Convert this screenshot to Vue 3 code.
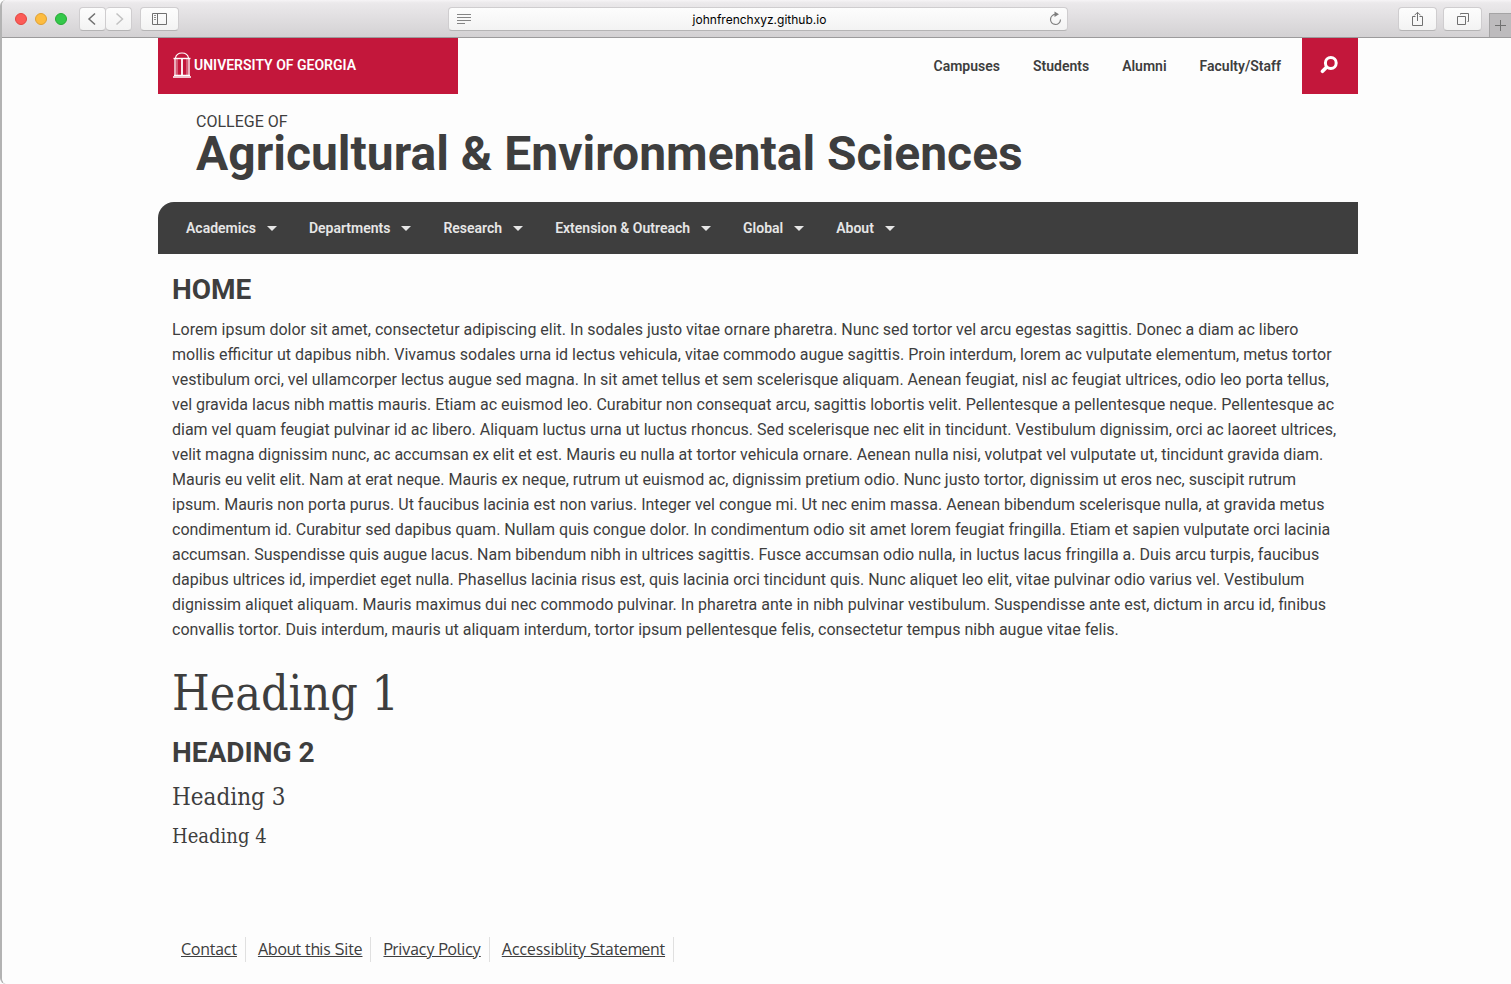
<script setup>
const topLinks = ['Campuses', 'Students', 'Alumni', 'Faculty/Staff']
const sections = ['Academics', 'Departments', 'Research', 'Extension & Outreach', 'Global', 'About']
const footerLinks = ['Contact', 'About this Site', 'Privacy Policy', 'Accessiblity Statement']
</script>

<template>
  <div class="window">
    <header class="toolbar">
      <div class="side">
        <div class="lights">
          <button class="light red" aria-label="Close"></button>
          <button class="light yellow" aria-label="Minimize"></button>
          <button class="light green" aria-label="Zoom"></button>
        </div>
        <div class="pair">
          <button class="tool back" aria-label="Back">
            <svg width="12" height="14" viewBox="0 0 12 14"><path d="M8 1.500L2 7l6 5.500" fill="none" stroke="#6f6f6f" stroke-width="1.500" /></svg>
          </button>
          <button class="tool forward" aria-label="Forward" disabled>
            <svg width="12" height="14" viewBox="0 0 12 14"><path d="M3.500 1.500l6 5.500-6 5.500" fill="none" stroke="#c2c2c2" stroke-width="1.500" /></svg>
          </button>
        </div>
        <button class="tool wide" aria-label="Show sidebar">
          <svg width="16" height="12" viewBox="0 0 16 12" fill="none" stroke="#707070"><path d="M.5.5h14v11H.5zM5.500.5v11" /><path d="M2 2.500h2M2 4.500h2M2 6.500h2" stroke="#8f8f8f" /></svg>
        </button>
      </div>
      <div class="address">
        <svg width="14" height="10" viewBox="0 0 14 10"><path d="M0 .5h14M0 3.500h14M0 6.500h14M0 9.500h8" stroke="#858585" /></svg>
        <input type="text" value="johnfrenchxyz.github.io" aria-label="Address" />
        <button class="reload" aria-label="Reload">
          <svg width="13" height="15" viewBox="0 0 13 15"><path d="M7 3.500A5 5 0 1 0 11.500 8.500" fill="none" stroke="#808080" stroke-width="1.200" /><path d="M5.500.5L10 3.300 5.500 6z" fill="#7d7d7d" /></svg>
        </button>
      </div>
      <div class="side end">
        <button class="tool wide" aria-label="Share">
          <svg width="13" height="16" viewBox="0 0 13 16" fill="none" stroke="#707070"><path d="M4.500 5.500h-3v9h10v-9h-3M6.500 10V1.500M3.500 4.300l3-3 3 3" /></svg>
        </button>
        <button class="tool wide" aria-label="Show all tabs">
          <svg width="14" height="14" viewBox="0 0 14 14" fill="none" stroke="#707070"><path d="M1.500 4.500h8v8h-8zM4.500 2.500v-1h8v8h-1" /></svg>
        </button>
        <button class="newtab" aria-label="New tab">
          <svg width="13" height="13" viewBox="0 0 13 13"><path d="M6.500 1v11M1 6.500h11" stroke="#707070" /></svg>
        </button>
      </div>
    </header>

    <div class="page">
      <div class="container">
        <div class="topbar">
          <a class="brand" href="#">
            <svg width="18" height="26" viewBox="0 0 18 26" fill="none" stroke="#fff">
              <path d="M2.500 6C3 3 5.500 1 9 1s6 2 6.500 5" stroke-width="1.200" />
              <path d="M.5 6.500h17" stroke-width="1.400" />
              <path d="M2 7v16M16 7v16" stroke-width="1.300" />
              <path d="M4 7v16M14 7v16" stroke-width=".6" />
              <path d="M9 7v16" stroke-width="1.800" />
              <path d="M1 23.300h16M0 25h18" stroke-width="1.300" />
            </svg>
            <span>UNIVERSITY OF GEORGIA</span>
          </a>
          <nav class="toplinks" aria-label="University">
            <a v-for="link in topLinks" :key="link" href="#">{{ link }}</a>
          </nav>
          <button class="search" aria-label="Search">
            <svg width="18" height="18" viewBox="0 0 18 18" fill="none" stroke="#fff"><circle cx="10.800" cy="7" r="5.400" stroke-width="3" /><path d="M6.500 11.300L2.500 15.300" stroke-width="3.600" stroke-linecap="round" /></svg>
          </button>
        </div>

        <div class="masthead">
          <p class="kicker">COLLEGE OF</p>
          <p class="title">Agricultural &amp; Environmental Sciences</p>
        </div>

        <nav class="mainnav" aria-label="Main">
          <button v-for="section in sections" :key="section">
            {{ section }}
            <svg width="10" height="5" viewBox="0 0 10 5"><path d="M0 0h10L5 5z" fill="#e6e6e6" /></svg>
          </button>
        </nav>

        <main class="content">
          <h2>HOME</h2>
          <p>Lorem ipsum dolor sit amet, consectetur adipiscing elit. In sodales justo vitae ornare pharetra. Nunc sed tortor vel arcu egestas sagittis. Donec a diam ac libero mollis efficitur ut dapibus nibh. Vivamus sodales urna id lectus vehicula, vitae commodo augue sagittis. Proin interdum, lorem ac vulputate elementum, metus tortor vestibulum orci, vel ullamcorper lectus augue sed magna. In sit amet tellus et sem scelerisque aliquam. Aenean feugiat, nisl ac feugiat ultrices, odio leo porta tellus, vel gravida lacus nibh mattis mauris. Etiam ac euismod leo. Curabitur non consequat arcu, sagittis lobortis velit. Pellentesque a pellentesque neque. Pellentesque ac diam vel quam feugiat pulvinar id ac libero. Aliquam luctus urna ut luctus rhoncus. Sed scelerisque nec elit in tincidunt. Vestibulum dignissim, orci ac laoreet ultrices, velit magna dignissim nunc, ac accumsan ex elit et est. Mauris eu nulla at tortor vehicula ornare. Aenean nulla nisi, volutpat vel vulputate ut, tincidunt gravida diam. Mauris eu velit elit. Nam at erat neque. Mauris ex neque, rutrum ut euismod ac, dignissim pretium odio. Nunc justo tortor, dignissim ut eros nec, suscipit rutrum ipsum. Mauris non porta purus. Ut faucibus lacinia est non varius. Integer vel congue mi. Ut nec enim massa. Aenean bibendum scelerisque nulla, at gravida metus condimentum id. Curabitur sed dapibus quam. Nullam quis congue dolor. In condimentum odio sit amet lorem feugiat fringilla. Etiam et sapien vulputate orci lacinia accumsan. Suspendisse quis augue lacus. Nam bibendum nibh in ultrices sagittis. Fusce accumsan odio nulla, in luctus lacus fringilla a. Duis arcu turpis, faucibus dapibus ultrices id, imperdiet eget nulla. Phasellus lacinia risus est, quis lacinia orci tincidunt quis. Nunc aliquet leo elit, vitae pulvinar odio varius vel. Vestibulum dignissim aliquet aliquam. Mauris maximus dui nec commodo pulvinar. In pharetra ante in nibh pulvinar vestibulum. Suspendisse ante est, dictum in arcu id, finibus convallis tortor. Duis interdum, mauris ut aliquam interdum, tortor ipsum pellentesque felis, consectetur tempus nibh augue vitae felis.</p>
          <h1>Heading 1</h1>
          <h2>HEADING 2</h2>
          <h3>Heading 3</h3>
          <h4>Heading 4</h4>
        </main>

        <footer class="footer">
          <ul>
            <li v-for="link in footerLinks" :key="link"><a href="#">{{ link }}</a></li>
          </ul>
        </footer>
      </div>
    </div>
  </div>
</template>

<style>
body {
  margin: 0;
  background: #fdfdfd;
}
</style>

<style scoped>
* {
  box-sizing: border-box;
}
.window {
  display: flex;
  flex-direction: column;
  min-height: 100vh;
  border-left: 2px solid #b3b3b3;
  border-radius: 6px 0 0 6px;
  color: #3e3e3e;
  font-family: Roboto, "Liberation Sans", sans-serif;
}
button {
  font: inherit;
  border: 0;
  padding: 0;
  margin: 0;
}
svg {
  display: block;
  flex: none;
}
.toolbar {
  display: flex;
  align-items: center;
  height: 38px;
  padding-left: 2px;
  border-bottom: 1px solid #9c9b9c;
  border-radius: 5px 0 0 0;
  background: linear-gradient(#f6f4f6 0, #ebe9eb 3px, #d3d1d3 100%);
}
.side {
  flex: 1;
  display: flex;
  align-items: center;
  align-self: stretch;
}
.lights {
  display: flex;
  gap: 8px;
  margin: 0 12px 0 11px;
}
.light {
  width: 12px;
  height: 12px;
  border-radius: 50%;
}
.red {
  background: #fc5b57;
  border: 1px solid #e24640;
}
.yellow {
  background: #fdbc40;
  border: 1px solid #dfa033;
}
.green {
  background: #34c84a;
  border: 1px solid #27aa35;
}
.pair {
  display: flex;
  margin-right: 8px;
}
.tool {
  display: flex;
  align-items: center;
  justify-content: center;
  height: 24px;
  width: 27px;
  border: 1px solid #cfcdcf;
  border-bottom-color: #b5b4b5;
  border-radius: 4px;
  background: linear-gradient(#fdfdfd, #f3f3f3);
}
.pair .forward {
  border-left: 0;
  width: 26px;
}
.wide {
  width: 39px;
}
.address {
  display: flex;
  align-items: center;
  width: 620px;
  max-width: 50%;
  height: 24px;
  padding: 0 5px 0 8px;
  border: 1px solid #cfcdcf;
  border-bottom-color: #b5b4b5;
  border-radius: 4px;
  background: linear-gradient(#fdfdfd, #f3f3f3);
}
.address input {
  flex: 1;
  min-width: 0;
  border: 0;
  padding: 2px 0 0;
  background: none;
  color: #000;
  font: 12px/16px Inter, "Liberation Sans", sans-serif;
  text-align: center;
}
.reload {
  background: none;
}
.end {
  justify-content: flex-end;
  gap: 6px;
}
.newtab {
  display: flex;
  align-items: center;
  justify-content: center;
  align-self: flex-end;
  width: 22px;
  height: 24px;
  margin-left: 1px;
  border: solid #a5a4a5;
  border-width: 1px 0 0 1px;
  background: #bdbbbd;
}
.page {
  flex: 1;
  padding-left: 3px;
  background: #fdfdfd;
  border-radius: 0 0 0 6px;
}
.container {
  max-width: 1200px;
  margin: 0 auto;
}
.topbar {
  display: flex;
  height: 56px;
}
.brand {
  display: flex;
  align-items: center;
  gap: 3px;
  width: 300px;
  padding: 0 15px 3px;
  background: #c3173b;
  color: #fff;
  font-size: 14px;
  font-weight: 600;
  text-decoration: none;
}
.toplinks {
  flex: 1;
  display: flex;
  align-items: center;
  justify-content: flex-end;
  gap: 33px;
  padding-right: 21px;
}
.toplinks a {
  color: #3e3e3e;
  font-size: 14px;
  font-weight: 600;
  text-decoration: none;
}
.search {
  display: flex;
  align-items: center;
  justify-content: center;
  width: 56px;
  padding: 0 2px 2px 0;
  background: #c3173b;
}
.masthead {
  height: 108px;
  padding: 18px 38px 0;
}
.masthead p {
  margin: 0;
}
.kicker {
  font-size: 16px;
  line-height: 20px;
}
.title {
  font-size: 48px;
  line-height: 44px;
  font-weight: 700;
}
.mainnav {
  display: flex;
  align-items: center;
  gap: 32px;
  height: 52px;
  padding-left: 28px;
  border-radius: 16px 0 0 0;
  background: #3e3e3e;
}
.mainnav button {
  display: flex;
  align-items: center;
  gap: 11px;
  background: none;
  color: #e6e6e6;
  font-size: 14px;
  font-weight: 600;
}
.content {
  padding: 18px 15px 0 14px;
}
.content h1,
.content h3,
.content h4 {
  font-family: "Roboto Slab", "DejaVu Serif Condensed", "DejaVu Serif", serif;
  font-weight: 400;
}
.content h1 {
  margin: 23px 0 14px;
  font-size: 48px;
  line-height: 56px;
}
.content h2 {
  margin: 0 0 10px;
  font-size: 28px;
  line-height: 35px;
  font-weight: 700;
}
.content h3 {
  margin: 0 0 8px;
  font-size: 24px;
  line-height: 34px;
}
.content h4 {
  margin: 0;
  font-size: 20px;
  line-height: 28px;
}
.content p {
  margin: 0;
  font-size: 16px;
  line-height: 25px;
}
.footer ul {
  display: flex;
  gap: 12px;
  margin: 87px 0 0;
  padding: 0 0 20px 23px;
  list-style: none;
}
.footer li {
  padding-right: 8px;
  border-right: 1px solid #e0e0e0;
}
.footer a {
  color: #3e3e3e;
  font: 16px/25px "Oxygen", "Open Sans", sans-serif;
}
</style>
